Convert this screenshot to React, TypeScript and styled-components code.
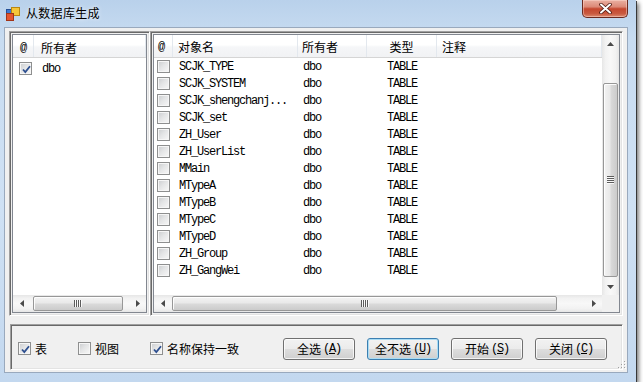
import React from "react";
import styled, { createGlobalStyle } from "styled-components";

const GlobalStyle = createGlobalStyle`
  html, body { margin: 0; padding: 0; background: #ffffff; }
  body {
    font-family: "Noto Sans CJK SC", "Liberation Sans", sans-serif;
    font-size: 12px;
    color: #000000;
  }
  *, *::before, *::after { box-sizing: border-box; }
`;

const Window = styled.div`
  width: 636px;
  height: 382px;
  display: flex;
  flex-direction: column;
  background: linear-gradient(to bottom, #b9d1eb 0%, #c8dcf1 10%, #cfe1f4 55%, #c3d8ef 100%);
  box-shadow: 1px 1px 0 rgba(40, 40, 40, 0.85), 3px 3px 4px rgba(0, 0, 0, 0.5);
`;

const TitleBar = styled.div`
  height: 27px;
  flex: none;
  display: flex;
  align-items: flex-start;
  padding-left: 6px;
`;

const AppIcon = styled.svg`
  flex: none;
  margin-top: 7px;
`;

const TitleText = styled.span`
  margin-left: 6px;
  margin-top: 5px;
  font-size: 12px;
  line-height: 16px;
  letter-spacing: 0.3px;
  color: #000000;
  text-shadow: 0 0 4px rgba(255, 255, 255, 0.9);
`;

const CloseButton = styled.div`
  margin-left: auto;
  margin-right: 8px;
  width: 46px;
  height: 18px;
  border: 1px solid #6b2a20;
  border-top: none;
  border-radius: 0 0 5px 5px;
  background: linear-gradient(to bottom, #eab0a2 0%, #dc8a78 40%, #c5472f 52%, #c95a40 80%, #dc8a70 100%);
  box-shadow: inset 0 0 0 1px rgba(255, 225, 215, 0.45);
  display: flex;
  align-items: center;
  justify-content: center;
`;

const Client = styled.div`
  position: relative;
  flex: 1;
  margin: 0 8px 9px 4px;
  border: 1px solid #99a9bd;
  background: #f0f0f0;
  padding: 3px 4px 2px 4px;
  display: flex;
  flex-direction: column;
`;

const SplitRow = styled.div`
  height: 285px;
  flex: none;
  display: flex;
`;

const Pane = styled.div<{ $w?: number }>`
  ${(p) => (p.$w ? `width: ${p.$w}px; flex: none;` : `flex: 1; min-width: 0;`)}
  height: 100%;
  display: flex;
  padding: 2px;
  border: 1px solid;
  border-color: #a0a0a0 #ffffff #ffffff #a0a0a0;
  box-shadow: inset 1px 1px 0 #696969, inset -1px -1px 0 #e3e3e3;
`;

const List = styled.div`
  flex: 1;
  min-width: 0;
  border: 1px solid #828790;
  background: #ffffff;
  display: flex;
  flex-direction: column;
  overflow: hidden;
`;

const ListMain = styled.div`
  flex: 1;
  min-height: 0;
  display: flex;
`;

const ListContent = styled.div`
  flex: 1;
  min-width: 0;
  display: flex;
  flex-direction: column;
`;

const Header = styled.div`
  height: 23px;
  flex: none;
  display: flex;
  background: linear-gradient(to bottom, #ffffff 0%, #ffffff 45%, #f5f6f8 55%, #f1f2f4 100%);
  border-bottom: 1px solid #d5d5d5;
`;

const HeadCell = styled.div<{ $w?: number; $pad?: number; $center?: boolean; $dy?: number }>`
  ${(p) => (p.$w ? `width: ${p.$w}px; flex: none;` : `flex: 1;`)}
  display: flex;
  align-items: center;
  justify-content: ${(p) => (p.$center ? "center" : "flex-start")};
  padding-left: ${(p) => (p.$center ? 0 : p.$pad ?? 5)}px;
  padding-top: ${(p) => p.$dy ?? 1}px;
  border-right: 1px solid #e3e8ee;
  font-size: 12px;
  white-space: nowrap;
`;

const MonoHead = styled.span`
  font-family: "Liberation Mono", monospace;
  font-size: 12px;
  letter-spacing: -1.2px;
`;

const Rows = styled.div<{ $top?: number }>`
  flex: 1;
  display: flex;
  flex-direction: column;
  padding-top: ${(p) => p.$top ?? 0}px;
`;

const Row = styled.div`
  height: 17px;
  flex: none;
  display: flex;
  align-items: center;
`;

const Cell = styled.div<{ $w?: number; $pad?: number; $center?: boolean }>`
  ${(p) => (p.$w ? `width: ${p.$w}px; flex: none;` : `flex: 1;`)}
  display: flex;
  align-items: center;
  justify-content: ${(p) => (p.$center ? "center" : "flex-start")};
  padding-left: ${(p) => (p.$center ? 0 : p.$pad ?? 5)}px;
  font-family: "Liberation Mono", monospace;
  font-size: 12px;
  letter-spacing: -1.2px;
  white-space: nowrap;
  overflow: hidden;
`;

const CheckBox = styled.span`
  width: 13px;
  height: 13px;
  flex: none;
  position: relative;
  border: 1px solid #8e8f8f;
  background: #f6f6f6;
  padding: 1px;
  display: flex;
`;

const CheckInner = styled.span`
  flex: 1;
  background: linear-gradient(135deg, #cfd1d3 0%, #e4e5e6 45%, #f5f5f5 100%);
`;

const CheckMark = styled.svg`
  position: absolute;
  left: 1px;
  top: 1px;
`;

const VScroll = styled.div`
  width: 17px;
  flex: none;
  display: flex;
  flex-direction: column;
  background: linear-gradient(to right, #e6e6e6 0%, #f2f2f2 20%, #f8f8f8 50%, #f2f2f2 80%, #e6e6e6 100%);
`;

const HScroll = styled.div`
  height: 17px;
  flex: 1;
  min-width: 0;
  display: flex;
  background: linear-gradient(to bottom, #e6e6e6 0%, #f2f2f2 20%, #f8f8f8 50%, #f2f2f2 80%, #e6e6e6 100%);
`;

const ScrollBottom = styled.div`
  height: 17px;
  flex: none;
  display: flex;
`;

const Corner = styled.div`
  width: 17px;
  height: 17px;
  flex: none;
  background: #f0f0f0;
`;

const ArrowBtn = styled.div`
  width: 17px;
  height: 17px;
  flex: none;
  display: flex;
  align-items: center;
  justify-content: center;
`;

const Track = styled.div<{ $vertical?: boolean }>`
  flex: 1;
  min-width: 0;
  min-height: 0;
  display: flex;
  flex-direction: ${(p) => (p.$vertical ? "column" : "row")};
`;

const VThumb = styled.div<{ $offset: number; $size: number }>`
  margin-top: ${(p) => p.$offset}px;
  height: ${(p) => p.$size}px;
  margin-left: 1px;
  width: 15px;
  flex: none;
  border: 1px solid #979797;
  border-radius: 2px;
  background: linear-gradient(to right, #f3f3f3 0%, #e9e9e9 45%, #d9d9d9 55%, #cbcbcb 100%);
  box-shadow: inset 1px 1px 0 rgba(255, 255, 255, 0.9);
  display: flex;
  align-items: center;
  justify-content: center;
`;

const HThumb = styled.div<{ $offset: number; $size: number }>`
  margin-left: ${(p) => p.$offset}px;
  width: ${(p) => p.$size}px;
  margin-top: 1px;
  height: 15px;
  flex: none;
  border: 1px solid #979797;
  border-radius: 2px;
  background: linear-gradient(to bottom, #f3f3f3 0%, #e9e9e9 45%, #d9d9d9 55%, #cbcbcb 100%);
  box-shadow: inset 1px 1px 0 rgba(255, 255, 255, 0.9);
  display: flex;
  align-items: center;
  justify-content: center;
`;

const GroupBox = styled.div`
  margin-top: 8px;
  margin-left: 1px;
  height: 46px;
  flex: none;
  display: flex;
  align-items: center;
  padding: 3px 15px 0 7px;
  border: 1px solid;
  border-color: #a0a0a0 #ffffff #ffffff #a0a0a0;
  box-shadow: inset 1px 1px 0 #696969, inset -1px -1px 0 #e3e3e3;
`;

const CheckGroup = styled.div`
  display: flex;
  align-items: center;
  gap: 31px;
`;

const CheckItem = styled.label`
  display: flex;
  align-items: center;
  gap: 4px;
  font-size: 12px;
  line-height: 16px;
`;

const ButtonGroup = styled.div`
  margin-left: auto;
  display: flex;
  gap: 12px;
`;

const Button = styled.div<{ $focused?: boolean }>`
  width: 72px;
  height: 22px;
  display: flex;
  align-items: center;
  justify-content: center;
  font-size: 12px;
  color: #000000;
  border: 1px solid ${(p) => (p.$focused ? "#3c7fb1" : "#707070")};
  border-radius: 3px;
  background: linear-gradient(to bottom, #f2f2f2 0%, #ebebeb 50%, #dddddd 51%, #cfcfcf 100%);
  box-shadow: inset 0 0 0 1px ${(p) => (p.$focused ? "#a8dcf5" : "rgba(255,255,255,0.75)")};
`;

const Accel = styled.span`
  font-family: "Liberation Mono", monospace;
  font-size: 12px;
  letter-spacing: -1.2px;
  margin-left: 2px;
`;

const SizeGrip = styled.svg`
  position: absolute;
  right: 1px;
  bottom: 1px;
`;

type Dir = "up" | "down" | "left" | "right";

const Arrow = ({ dir }: { dir: Dir }) => {
  const vertical = dir === "up" || dir === "down";
  const pts = {
    up: "0,4 3.5,0 7,4",
    down: "0,0 7,0 3.5,4",
    left: "4,0 4,7 0,3.5",
    right: "0,0 4,3.5 0,7",
  }[dir];
  return (
    <svg width={vertical ? 7 : 4} height={vertical ? 4 : 7} viewBox={vertical ? "0 0 7 4" : "0 0 4 7"}>
      <polygon points={pts} fill="#4a4a4a" />
    </svg>
  );
};

const GripV = () => (
  <svg width="7" height="8" viewBox="0 0 7 8">
    {[0, 2, 4, 6].map((y) => (
      <g key={y}>
        <rect x="0" y={y} width="7" height="1" fill="#5c5c5c" />
        <rect x="0" y={y + 1} width="7" height="1" fill="#ffffff" opacity="0.8" />
      </g>
    ))}
  </svg>
);

const GripH = () => (
  <svg width="8" height="7" viewBox="0 0 8 7">
    {[0, 2, 4, 6].map((x) => (
      <g key={x}>
        <rect x={x} y="0" width="1" height="7" fill="#5c5c5c" />
        <rect x={x + 1} y="0" width="1" height="7" fill="#ffffff" opacity="0.8" />
      </g>
    ))}
  </svg>
);

const Check = ({ checked }: { checked?: boolean }) => (
  <CheckBox>
    <CheckInner />
    {checked && (
      <CheckMark width="11" height="11" viewBox="0 0 11 11">
        <path d="M2 5.5 L4.3 8 L9 2.2" fill="none" stroke="#2d4f8f" strokeWidth="1.8" />
      </CheckMark>
    )}
  </CheckBox>
);

const tables = [
  "SCJK_TYPE",
  "SCJK_SYSTEM",
  "SCJK_shengchanj...",
  "SCJK_set",
  "ZH_User",
  "ZH_UserList",
  "MMain",
  "MTypeA",
  "MTypeB",
  "MTypeC",
  "MTypeD",
  "ZH_Group",
  "ZH_GangWei",
];

export default function App() {
  return (
    <>
      <GlobalStyle />
      <Window>
        <TitleBar>
          <AppIcon width="14" height="14" viewBox="0 0 14 14">
            <rect x="0.5" y="2.5" width="5" height="5" fill="#3f78d0" stroke="#244f96" />
            <rect x="5.5" y="0.5" width="8" height="8" fill="#f6c63a" stroke="#b98710" />
            <rect x="0.5" y="6.5" width="7" height="7" fill="#e5552f" stroke="#a23418" />
          </AppIcon>
          <TitleText>从数据库生成</TitleText>
          <CloseButton>
            <svg width="13" height="11" viewBox="0 0 13 11">
              <path d="M2 1.5 L11 9.5 M11 1.5 L2 9.5" stroke="#4a1810" strokeWidth="3.6" strokeLinecap="round" />
              <path d="M2 1.5 L11 9.5 M11 1.5 L2 9.5" stroke="#ffffff" strokeWidth="2" strokeLinecap="round" />
            </svg>
          </CloseButton>
        </TitleBar>
        <Client>
          <SplitRow>
            <Pane $w={141}>
              <List>
                <Header>
                  <HeadCell $w={21} $pad={7} $dy={3}>
                    <MonoHead>@</MonoHead>
                  </HeadCell>
                  <HeadCell $pad={7} $dy={3}>所有者</HeadCell>
                </Header>
                <Rows $top={2}>
                  <Row>
                    <Cell $w={21} $pad={6}>
                      <Check checked />
                    </Cell>
                    <Cell $pad={8}>dbo</Cell>
                  </Row>
                </Rows>
                <ScrollBottom>
                  <HScroll>
                    <ArrowBtn>
                      <Arrow dir="left" />
                    </ArrowBtn>
                    <Track>
                      <HThumb $offset={3} $size={90}>
                        <GripH />
                      </HThumb>
                    </Track>
                    <ArrowBtn>
                      <Arrow dir="right" />
                    </ArrowBtn>
                  </HScroll>
                </ScrollBottom>
              </List>
            </Pane>
            <Pane>
              <List>
                <ListMain>
                  <ListContent>
                    <Header>
                      <HeadCell $w={19} $pad={4}>
                        <MonoHead>@</MonoHead>
                      </HeadCell>
                      <HeadCell $w={125} $pad={5}>对象名</HeadCell>
                      <HeadCell $w={69} $pad={4}>所有者</HeadCell>
                      <HeadCell $w={70} $center>类型</HeadCell>
                      <HeadCell $pad={5}>注释</HeadCell>
                    </Header>
                    <Rows>
                      {tables.map((t) => (
                        <Row key={t}>
                          <Cell $w={19} $pad={3}>
                            <Check />
                          </Cell>
                          <Cell $w={125} $pad={6}>{t}</Cell>
                          <Cell $w={69} $pad={5}>dbo</Cell>
                          <Cell $w={70} $center>TABLE</Cell>
                          <Cell />
                        </Row>
                      ))}
                    </Rows>
                  </ListContent>
                  <VScroll>
                    <ArrowBtn>
                      <Arrow dir="up" />
                    </ArrowBtn>
                    <Track $vertical>
                      <VThumb $offset={31} $size={194}>
                        <GripV />
                      </VThumb>
                    </Track>
                    <ArrowBtn>
                      <Arrow dir="down" />
                    </ArrowBtn>
                  </VScroll>
                </ListMain>
                <ScrollBottom>
                  <HScroll>
                    <ArrowBtn>
                      <Arrow dir="left" />
                    </ArrowBtn>
                    <Track>
                      <HThumb $offset={1} $size={385}>
                        <GripH />
                      </HThumb>
                    </Track>
                    <ArrowBtn>
                      <Arrow dir="right" />
                    </ArrowBtn>
                  </HScroll>
                  <Corner />
                </ScrollBottom>
              </List>
            </Pane>
          </SplitRow>
          <GroupBox>
            <CheckGroup>
              <CheckItem>
                <Check checked />
                表
              </CheckItem>
              <CheckItem>
                <Check />
                视图
              </CheckItem>
              <CheckItem>
                <Check checked />
                名称保持一致
              </CheckItem>
            </CheckGroup>
            <ButtonGroup>
              <Button>
                全选<Accel>(<u>A</u>)</Accel>
              </Button>
              <Button $focused>
                全不选<Accel>(<u>U</u>)</Accel>
              </Button>
              <Button>
                开始<Accel>(<u>S</u>)</Accel>
              </Button>
              <Button>
                关闭<Accel>(<u>C</u>)</Accel>
              </Button>
            </ButtonGroup>
          </GroupBox>
          <SizeGrip width="10" height="10" viewBox="0 0 10 10">
            {[
              [8, 0],
              [8, 3],
              [5, 3],
              [8, 6],
              [5, 6],
              [2, 6],
            ].map(([x, y]) => (
              <g key={`${x}-${y}`}>
                <rect x={x} y={y} width="1" height="1" fill="#a0a0a0" />
                <rect x={x + 1} y={y + 1} width="1" height="1" fill="#ffffff" />
              </g>
            ))}
          </SizeGrip>
        </Client>
      </Window>
    </>
  );
}
